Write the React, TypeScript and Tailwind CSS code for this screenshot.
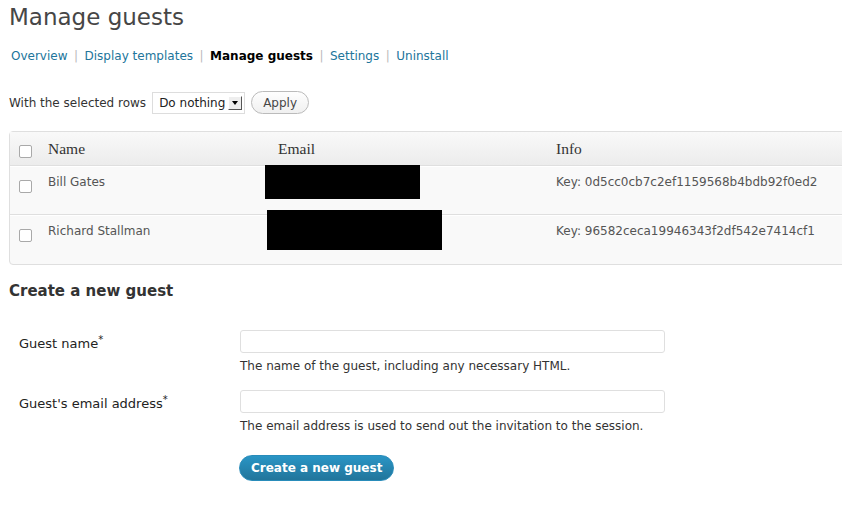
import React from 'react'

const sans = "font-['DejaVu_Sans',sans-serif]"
const serif = "font-['Liberation_Serif','DejaVu_Serif',serif]"

const guests = [
  { name: 'Bill Gates', key: '0d5cc0cb7c2ef1159568b4bdb92f0ed2' },
  { name: 'Richard Stallman', key: '96582ceca19946343f2df542e7414cf1' },
]

function Checkbox() {
  return <span className="block w-[13px] h-[13px] rounded-[2px] border border-[#a9a9a9] bg-white" />
}

function Sep() {
  return <span className="text-[#bbb] px-[6px] mx-[0.5px]">|</span>
}

export default function App() {
  return (
    <div className={`w-[842px] h-[507px] overflow-hidden bg-white ${sans} text-[#333]`}>
      <div className="pl-[9px]">
        <h2 className="text-[23px] leading-[30px] pt-[2px] text-[#464646] font-normal">Manage guests</h2>

        {/* Sub navigation */}
        <div className="mt-[16px] flex items-center text-[12px] leading-[16px] pl-[2px]">
          <a className="text-[#21759b]">Overview</a>
          <Sep />
          <a className="text-[#21759b]">Display templates</a>
          <Sep />
          <span className="font-bold text-black">Manage guests</span>
          <Sep />
          <a className="text-[#21759b]">Settings</a>
          <Sep />
          <a className="text-[#21759b]">Uninstall</a>
        </div>

        {/* Bulk actions */}
        <div className="mt-[27px] flex items-center text-[12px] text-[#333]">
          <span>With the selected rows</span>
          <div className="ml-[6px] h-[22px] w-[93px] border border-[#ddd] bg-white flex items-center pl-[6px] pr-[2px]">
            <span className="flex-1 text-[#222]">Do nothing</span>
            <span className="w-[14px] h-[14px] bg-[#eee] border-t border-l border-white border-r border-b border-r-[#555] border-b-[#555] flex items-center justify-center">
              <span className="block w-0 h-0 border-l-[3px] border-r-[3px] border-t-[4px] border-l-transparent border-r-transparent border-t-black" />
            </span>
          </div>
          <button className="ml-[6px] h-[23px] px-[11px] rounded-full border border-[#bbb] bg-[linear-gradient(to_bottom,#fefefe,#f0f0f0)] text-[#464646] text-[12px]">
            Apply
          </button>
        </div>

        {/* Guests table */}
        <div className="relative mt-[17px] w-[860px] border border-[#dfdfdf] rounded-l-[4px] bg-[#f9f9f9]">
          <div className="flex h-[34px] items-center bg-[linear-gradient(to_bottom,#f9f9f9,#ececec)] border-b border-[#dfdfdf]">
            <div className="w-[31px] pl-[9px] pt-[5px]"><Checkbox /></div>
            <div className={`w-[230px] pl-[7px] text-[15.5px] text-[#333] ${serif}`}>Name</div>
            <div className={`w-[278px] pl-[7px] text-[15.5px] text-[#333] ${serif}`}>Email</div>
            <div className={`flex-1 pl-[7px] text-[15.5px] text-[#333] ${serif}`}>Info</div>
          </div>
          {guests.map((g, i) => (
            <div key={g.name} className={`flex h-[49px] items-start pt-[6px] border-t border-white ${i === 0 ? 'border-b border-b-[#dfdfdf]' : ''}`}>
              <div className="w-[31px] pl-[9px] pt-[7px]"><Checkbox /></div>
              <div className="w-[230px] pl-[7px] text-[12px] text-[#555]">{g.name}</div>
              <div className="w-[278px]" />
              <div className="flex-1 pl-[7px] text-[12px] text-[#555]">Key: {g.key}</div>
            </div>
          ))}
          {/* redaction boxes over the emails */}
          <div className="absolute left-[255px] top-[33px] w-[155px] h-[34px] bg-black" />
          <div className="absolute left-[257px] top-[78px] w-[175px] h-[40px] bg-black" />
        </div>

        {/* Create form */}
        <h3 className="mt-[16px] text-[15px] font-bold text-[#333] leading-[20px]">Create a new guest</h3>

        <div className="mt-[29px] flex flex-col gap-[15px]">
          <div className="flex">
            <div className="w-[231px] pl-[10px] pt-[4px] text-[13px] text-[#222]">
              Guest name<span className="relative -top-[5px] text-[10px]">*</span>
            </div>
            <div className="flex flex-col">
              <div className="w-[425px] h-[23px] border border-[#dfdfdf] rounded-[3px] bg-white" />
              <p className="mt-[4px] text-[12px] text-[#333]">The name of the guest, including any necessary HTML.</p>
            </div>
          </div>
          <div className="flex">
            <div className="w-[231px] pl-[10px] pt-[4px] text-[13px] text-[#222]">
              Guest's email address<span className="relative -top-[5px] text-[10px]">*</span>
            </div>
            <div className="flex flex-col">
              <div className="w-[425px] h-[23px] border border-[#dfdfdf] rounded-[3px] bg-white" />
              <p className="mt-[4px] text-[12px] text-[#333]">The email address is used to send out the invitation to the session.</p>
            </div>
          </div>
        </div>

        <div className="mt-[20px] pl-[230px]">
          <button className="h-[26px] px-[11px] rounded-full border border-[#298cba] bg-[linear-gradient(to_bottom,#2a95c5,#21759b)] text-white font-bold text-[12px]">
            Create a new guest
          </button>
        </div>
      </div>
    </div>
  )
}
